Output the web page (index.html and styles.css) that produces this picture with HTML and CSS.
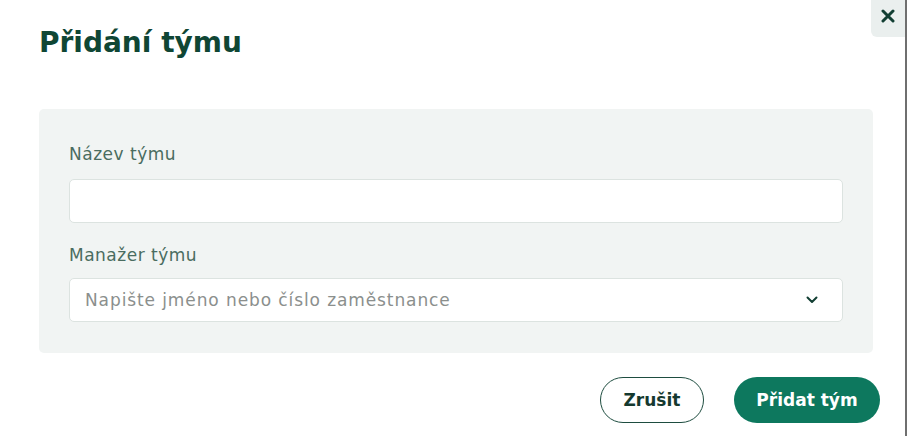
FILE: index.html
```html
<!DOCTYPE html>
<html lang="cs">
<head>
<meta charset="utf-8">
<link rel="stylesheet" href="styles.css">
</head>
<body>
<div class="modal">
  <button class="close" aria-label="Zavřít">
    <svg width="14" height="14" viewBox="0 0 14 14"><path d="M2 2 L12 12 M12 2 L2 12" stroke="#123f33" stroke-width="3" stroke-linecap="round"/></svg>
  </button>
  <h1 class="title">Přidání týmu</h1>
  <div class="panel">
    <label class="label">Název týmu</label>
    <div class="input"></div>
    <label class="label second">Manažer týmu</label>
    <div class="input select">
      <span class="placeholder">Napište jméno nebo číslo zaměstnance</span>
      <svg class="chev" width="12" height="8" viewBox="0 0 12 8"><path d="M1.5 1.5 L6 6 L10.5 1.5" fill="none" stroke="#123f33" stroke-width="2" stroke-linecap="round" stroke-linejoin="round"/></svg>
    </div>
  </div>
  <div class="actions">
    <button class="btn btn-outline">Zrušit</button>
    <button class="btn btn-primary">Přidat tým</button>
  </div>
</div>
</body>
</html>
```

FILE: styles.css
```css
html, body {
  margin: 0;
  padding: 0;
  background: #ffffff;
}
body {
  font-family: "DejaVu Sans", "Noto Sans", sans-serif;
  width: 907px;
  height: 436px;
  overflow: hidden;
}
.modal {
  position: relative;
  width: 905px;
  height: 436px;
  border-right: 2px solid #6f6f6f;
  box-sizing: content-box;
}
.close {
  position: absolute;
  top: 0;
  right: 0;
  width: 34px;
  height: 37px;
  border: none;
  background: #eaefee;
  border-bottom-left-radius: 6px;
  display: flex;
  align-items: center;
  justify-content: center;
  padding: 0 0 6px 0;
}
.title {
  margin: 0;
  padding: 24px 0 0 39px;
  font-size: 28px;
  font-weight: 700;
  color: #0f4634;
  line-height: 38px;
  letter-spacing: 0;
}
.panel {
  margin: 47px 32px 0 39px;
  background: #f1f4f3;
  border-radius: 5px;
  padding: 34px 30px 31px 30px;
  display: flex;
  flex-direction: column;
}
.label {
  font-size: 17px;
  color: #4a6c60;
  line-height: 22px;
  height: 22px;
  margin-bottom: 14px;
  letter-spacing: 0.5px;
}
.label.second {
  margin-top: 21px;
  margin-bottom: 12px;
}
.input {
  height: 44px;
  background: #ffffff;
  border: 1px solid #dce3e0;
  border-radius: 5px;
  box-sizing: border-box;
}
.select {
  display: flex;
  align-items: center;
  justify-content: space-between;
  padding: 0 24px 0 15px;
}
.placeholder {
  font-size: 17px;
  color: #8b8f8d;
  letter-spacing: 0.9px;
}
.chev {
  display: block;
}
.actions {
  display: flex;
  justify-content: flex-end;
  gap: 30px;
  padding: 24px 25px 0 0;
}
.btn {
  font-family: "DejaVu Sans", "Noto Sans", sans-serif;
  font-weight: 700;
  font-size: 17px;
  height: 46px;
  border-radius: 23px;
  box-sizing: border-box;
  cursor: pointer;
  letter-spacing: 0;
}
.btn-outline {
  width: 104px;
  background: #ffffff;
  border: 1.5px solid #1e4d40;
  color: #15392f;
}
.btn-primary {
  width: 146px;
  background: #0d785e;
  border: none;
  color: #ffffff;
}
```
